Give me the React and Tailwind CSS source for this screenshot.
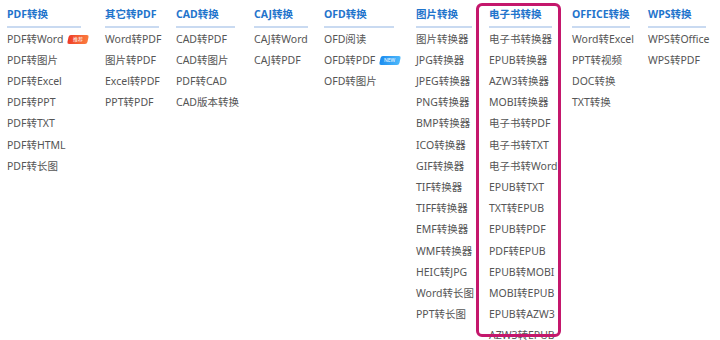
import React from 'react';

const columns = [
  {
    title: 'PDF转换',
    width: 'w-[98px]',
    line: 'w-[74px]',
    items: ['PDF转Word', 'PDF转图片', 'PDF转Excel', 'PDF转PPT', 'PDF转TXT', 'PDF转HTML', 'PDF转长图'],
    badges: { 'PDF转Word': 'hot' },
  },
  {
    title: '其它转PDF',
    width: 'w-[71px]',
    line: 'w-[54px]',
    items: ['Word转PDF', '图片转PDF', 'Excel转PDF', 'PPT转PDF'],
  },
  {
    title: 'CAD转换',
    width: 'w-[78px]',
    line: 'w-[59px]',
    items: ['CAD转PDF', 'CAD转图片', 'PDF转CAD', 'CAD版本转换'],
  },
  {
    title: 'CAJ转换',
    width: 'w-[70px]',
    line: 'w-[54px]',
    items: ['CAJ转Word', 'CAJ转PDF'],
  },
  {
    title: 'OFD转换',
    width: 'w-[92px]',
    line: 'w-[70px]',
    items: ['OFD阅读', 'OFD转PDF', 'OFD转图片'],
    badges: { 'OFD转PDF': 'new' },
  },
  {
    title: '图片转换',
    width: 'w-[73px]',
    line: 'w-[56px]',
    items: [
      '图片转换器', 'JPG转换器', 'JPEG转换器', 'PNG转换器', 'BMP转换器', 'ICO转换器', 'GIF转换器',
      'TIF转换器', 'TIFF转换器', 'EMF转换器', 'WMF转换器', 'HEIC转JPG', 'Word转长图', 'PPT转长图',
    ],
  },
  {
    title: '电子书转换',
    width: 'w-[83px]',
    line: 'w-[63px]',
    highlight: true,
    items: [
      '电子书转换器', 'EPUB转换器', 'AZW3转换器', 'MOBI转换器', '电子书转PDF', '电子书转TXT', '电子书转Word',
      'EPUB转TXT', 'TXT转EPUB', 'EPUB转PDF', 'PDF转EPUB', 'EPUB转MOBI', 'MOBI转EPUB', 'EPUB转AZW3', 'AZW3转EPUB',
    ],
  },
  {
    title: 'OFFICE转换',
    width: 'w-[76px]',
    line: 'w-[58px]',
    items: ['Word转Excel', 'PPT转视频', 'DOC转换', 'TXT转换'],
  },
  {
    title: 'WPS转换',
    width: 'w-[70px]',
    line: 'w-[58px]',
    items: ['WPS转Office', 'WPS转PDF'],
  },
];

function Badge({ type }) {
  // small slanted tag next to a menu item
  const hot = type === 'hot';
  return (
    <span
      className={`ml-[5px] inline-flex h-[9px] w-[20px] -skew-x-12 items-center justify-center rounded-[2px] text-[5px] leading-none text-white ${
        hot ? 'bg-gradient-to-r from-[#ee3a28] to-[#fb7c3e]' : 'bg-gradient-to-r from-[#1b8cef] to-[#4cb8fb]'
      }`}
    >
      <span className="skew-x-12">{hot ? '推荐' : 'NEW'}</span>
    </span>
  );
}

function Column({ col }) {
  return (
    <div className={`relative shrink-0 ${col.width}`}>
      {col.highlight && (
        <div className="pointer-events-none absolute left-[-13px] top-[-2px] z-10 h-[334px] w-[85px] rounded-[6px] border-[3px] border-[#c4176c]" />
      )}
      <div
        className={`${col.line} whitespace-nowrap border-b-2 border-[#c9daf1] pb-[3px] text-[10.5px] font-bold leading-[18px] text-[#1f74cc]`}
      >
        {col.title}
      </div>
      <ul className="pt-[1px]">
        {col.items.map((item) => (
          <li key={item} className="flex h-[21.2px] items-center whitespace-nowrap text-[10.5px] text-[#555]">
            {item}
            {col.badges && col.badges[item] && <Badge type={col.badges[item]} />}
          </li>
        ))}
      </ul>
    </div>
  );
}

export default function App() {
  return (
    <div
      className="h-[340px] w-[720px] overflow-hidden bg-white pl-[7px] pt-[5px]"
      style={{ fontFamily: '"Noto Sans", "Noto Sans CJK SC", sans-serif' }}
    >
      <div className="flex">
        {columns.map((col) => (
          <Column key={col.title} col={col} />
        ))}
      </div>
    </div>
  );
}
